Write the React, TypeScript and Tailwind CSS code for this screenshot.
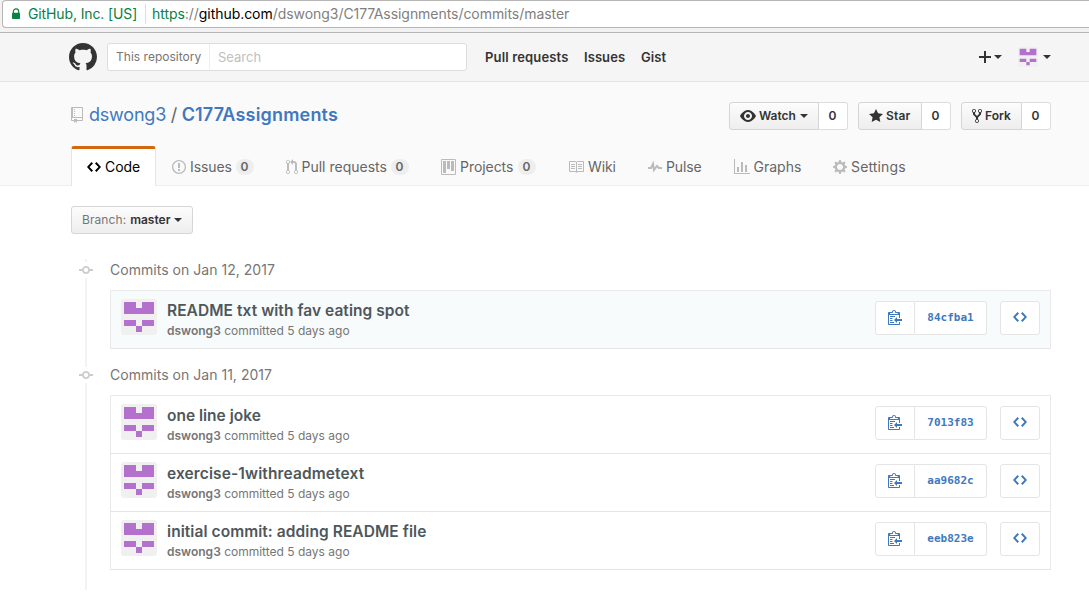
import React from "react";

const icons = {
  mark: [16, "M8 0C3.58 0 0 3.58 0 8c0 3.54 2.29 6.53 5.47 7.59.4.07.55-.17.55-.38 0-.19-.01-.82-.01-1.49-2.01.37-2.53-.49-2.69-.94-.09-.23-.48-.94-.82-1.13-.28-.15-.68-.52-.01-.53.63-.01 1.08.58 1.23.82.72 1.21 1.87.87 2.33.66.07-.52.28-.87.51-1.07-1.78-.2-3.64-.89-3.64-3.95 0-.87.31-1.59.82-2.15-.08-.2-.36-1.02.08-2.12 0 0 .67-.21 2.2.82.64-.18 1.32-.27 2-.27.68 0 1.36.09 2 .27 1.53-1.04 2.2-.82 2.2-.82.44 1.1.16 1.92.08 2.12.51.56.82 1.27.82 2.15 0 3.07-1.87 3.75-3.65 3.95.29.25.54.73.54 1.48 0 1.07-.01 1.93-.01 2.2 0 .21.15.46.55.38A8.013 8.013 0 0 0 16 8c0-4.42-3.58-8-8-8z"],
  repo: [12, "M4 9H3V8h1v1zm0-3H3v1h1V6zm0-2H3v1h1V4zm0-2H3v1h1V2zm8-1v12c0 .55-.45 1-1 1H6v2l-1.5-1.5L3 16v-2H1c-.55 0-1-.45-1-1V1c0-.55.45-1 1-1h10c.55 0 1 .45 1 1zm-1 10H1v2h2v-1h3v1h5v-2zm0-10H2v9h9V1z"],
  eye: [16, "M8.06 2C3 2 0 8 0 8s3 6 8.06 6C13 14 16 8 16 8s-3-6-7.94-6zM8 12c-2.2 0-4-1.78-4-4 0-2.2 1.8-4 4-4 2.22 0 4 1.8 4 4 0 2.22-1.78 4-4 4zm2-4c0 1.11-.89 2-2 2-1.11 0-2-.89-2-2 0-1.11.89-2 2-2 1.11 0 2 .89 2 2z"],
  star: [14, "M14 6l-4.9-.64L7 1 4.9 5.36 0 6l3.6 3.26L2.67 14 7 11.67 11.33 14l-.93-4.74z"],
  fork: [10, "M8 1a1.993 1.993 0 0 0-1 3.72V6L5 8 3 6V4.72A1.993 1.993 0 0 0 2 1a1.993 1.993 0 0 0-1 3.72V6.5l3 3v1.78A1.993 1.993 0 0 0 5 15a1.993 1.993 0 0 0 1-3.72V9.5l3-3V4.72A1.993 1.993 0 0 0 8 1zM2 4.2C1.34 4.2.8 3.65.8 3c0-.65.55-1.2 1.2-1.2.65 0 1.2.55 1.2 1.2 0 .65-.55 1.2-1.2 1.2zm3 10c-.66 0-1.2-.55-1.2-1.2 0-.65.55-1.2 1.2-1.2.65 0 1.2.55 1.2 1.2 0 .65-.55 1.2-1.2 1.2zm3-10c-.66 0-1.2-.55-1.2-1.2 0-.65.55-1.2 1.2-1.2.65 0 1.2.55 1.2 1.2 0 .65-.55 1.2-1.2 1.2z"],
  code: [14, "M9.5 3L8 4.5 11.5 8 8 11.5 9.5 13 14 8 9.5 3zm-5 0L0 8l4.5 5L6 11.5 2.5 8 6 4.5 4.5 3z"],
  issue: [14, "M7 2.3c3.14 0 5.7 2.56 5.7 5.7s-2.56 5.7-5.7 5.7A5.71 5.71 0 0 1 1.3 8c0-3.14 2.56-5.7 5.7-5.7zM7 1C3.14 1 0 4.14 0 8s3.14 7 7 7 7-3.14 7-7-3.14-7-7-7zm1 3H6v5h2V4zm0 6H6v2h2v-2z"],
  pull: [12, "M11 11.28V5c-.03-.78-.34-1.47-.94-2.06C9.46 2.35 8.78 2.03 8 2H7V0L4 3l3 3V4h1c.27.02.48.11.69.31.21.2.3.42.31.69v6.28A1.993 1.993 0 0 0 10 15a1.993 1.993 0 0 0 1-3.72zm-1 2.92c-.66 0-1.2-.55-1.2-1.2 0-.65.55-1.2 1.2-1.2.65 0 1.2.55 1.2 1.2 0 .65-.55 1.2-1.2 1.2zM4 3c0-1.11-.89-2-2-2a1.993 1.993 0 0 0-1 3.72v6.56A1.993 1.993 0 0 0 2 15a1.993 1.993 0 0 0 1-3.72V4.72c.59-.34 1-.98 1-1.72zm-.8 10c0 .66-.55 1.2-1.2 1.2-.65 0-1.2-.55-1.2-1.2 0-.65.55-1.2 1.2-1.2.65 0 1.2.55 1.2 1.2zM2 4.2C1.34 4.2.8 3.65.8 3c0-.65.55-1.2 1.2-1.2.65 0 1.2.55 1.2 1.2 0 .65-.55 1.2-1.2 1.2z"],
  project: [15, "M10 12h3V2h-3v10zm-4-2h3V2H6v8zm-4 4h3V2H2v12zm-1 1h13V1H1v14zM14 0H1a1 1 0 0 0-1 1v14a1 1 0 0 0 1 1h13a1 1 0 0 0 1-1V1a1 1 0 0 0-1-1z"],
  book: [16, "M3 5h4v1H3V5zm0 3h4V7H3v1zm0 2h4V9H3v1zm11-5h-4v1h4V5zm0 2h-4v1h4V7zm0 2h-4v1h4V9zm2-6v9c0 .55-.45 1-1 1H9.5l-1 1-1-1H2c-.55 0-1-.45-1-1V3c0-.55.45-1 1-1h5.5l1 1 1-1H15c.55 0 1 .45 1 1zm-8 .5L7.5 3H2v9h6V3.5zm7-.5H9.5l-.5.5V12h6V3z"],
  pulse: [14, "M11.5 8L8.8 5.4 6.6 8.5 5.5 1.6 2.38 8H0v2h3.6l.9-1.8.9 5.4L9 8.5l1.6 1.5H14V8z"],
  graph: [16, "M16 14v1H0V0h1v14h15zM5 13H3V8h2v5zm4 0H7V3h2v10zm4 0h-2V6h2v7z"],
  gear: [14, "M14 8.77v-1.6l-1.94-.64-.45-1.09.88-1.84-1.13-1.13-1.81.91-1.09-.45-.69-1.92h-1.6l-.63 1.94-1.11.45-1.84-.88-1.13 1.13.91 1.81-.45 1.09L0 7.23v1.59l1.94.64.45 1.09-.88 1.84 1.13 1.13 1.81-.91 1.09.45.69 1.92h1.59l.63-1.94 1.11-.45 1.84.88 1.13-1.13-.92-1.81.47-1.09L14 8.75v.02zM7 11c-1.66 0-3-1.34-3-3s1.34-3 3-3 3 1.34 3 3-1.34 3-3 3z"],
  clippy: [14, "M2 13h4v1H2v-1zm5-6H2v1h5V7zm2 3V8l-3 3 3 3v-2h5v-2H9zM4.5 9H2v1h2.5V9zM2 12h2.5v-1H2v1zm9 1h1v2c-.02.28-.11.52-.3.7-.19.18-.42.28-.7.3H1c-.55 0-1-.45-1-1V4c0-.55.45-1 1-1h3c0-1.11.89-2 2-2 1.11 0 2 .89 2 2h3c.55 0 1 .45 1 1v5h-1V6H1v9h10v-2zM2 5h8c0-.55-.45-1-1-1H8c-.55 0-1-.45-1-1s-.45-1-1-1-1 .45-1 1-.45 1-1 1H3c-.55 0-1 .45-1 1z"],
  commit: [14, "M10.86 7c-.45-1.72-2-3-3.86-3-1.86 0-3.41 1.28-3.86 3H0v2h3.14c.45 1.72 2 3 3.86 3 1.86 0 3.41-1.28 3.86-3H14V7h-3.14zM7 10.2c-1.22 0-2.2-.98-2.2-2.2 0-1.22.98-2.2 2.2-2.2 1.22 0 2.2.98 2.2 2.2 0 1.22-.98 2.2-2.2 2.2z"],
  plus: [12, "M12 9H7v5H5V9H0V7h5V2h2v5h5z"],
} as const;

type IconName = keyof typeof icons;

function Icon({ name, className = "" }: { name: IconName; className?: string }) {
  const [w, d] = icons[name];
  return (
    <svg width={w} height={16} viewBox={`0 0 ${w} 16`} fill="currentColor" className={`shrink-0 ${className}`}>
      <path fillRule="evenodd" d={d} />
    </svg>
  );
}

function Caret({ className = "" }: { className?: string }) {
  return (
    <svg width="8" height="4" viewBox="0 0 8 4" fill="currentColor" className={`shrink-0 ${className}`}>
      <path d="M0 0h8L4 4z" />
    </svg>
  );
}

function Avatar({ className }: { className: string }) {
  return (
    <svg viewBox="0 0 36 36" className={`shrink-0 ${className}`}>
      <rect width="36" height="36" rx="3" fill="#f0f0f0" />
      <path fill="#b370cd" d="M3 3h12v6h6V3h12v12H3zM3 21h12v6H3zM21 21h12v6H21zM15 27h6v6h-6z" />
    </svg>
  );
}

function SocialButton({ icon, label, labelClass, leftClass, rightClass, caret }: { icon: IconName; label: string; labelClass: string; leftClass: string; rightClass: string; caret?: boolean }) {
  return (
    <div className="flex h-7 text-[12px] font-semibold text-[#333]">
      <div className={`flex items-center rounded-l-[3px] border border-[#d5d5d5] bg-linear-to-b from-[#fcfcfc] to-[#eee] pl-[10px] ${leftClass}`}>
        <Icon name={icon} />
        <span className={`whitespace-nowrap ${labelClass}`}>{label}</span>
        {caret && <Caret className="ml-1" />}
      </div>
      <div className={`flex items-center justify-center rounded-r-[3px] border border-l-0 border-[#ddd] bg-white pr-px ${rightClass}`}>0</div>
    </div>
  );
}

const tabs: { icon: IconName; label: string; width: string; text: string; count?: boolean }[] = [
  { icon: "issue", label: "Issues", width: "w-[114px]", text: "ml-1 w-[42px] tracking-[-0.1px]", count: true },
  { icon: "pull", label: "Pull requests", width: "w-[155px]", text: "ml-[3.5px] w-[85.5px] tracking-[0px]", count: true },
  { icon: "project", label: "Projects", width: "w-[127px]", text: "ml-1 w-[54px] tracking-[-0.05px]", count: true },
  { icon: "book", label: "Wiki", width: "w-[80px]", text: "ml-1 tracking-[-0.1px]" },
  { icon: "pulse", label: "Pulse", width: "w-[86px]", text: "ml-1 tracking-[-0.1px]" },
  { icon: "graph", label: "Graphs", width: "w-[99px]", text: "ml-[3.5px] tracking-[0px]" },
  { icon: "gear", label: "Settings", width: "w-[80px]", text: "ml-1 tracking-[0.15px]" },
];

function CommitRow({ title, sha, titleClass, highlighted }: { title: string; sha: string; titleClass: string; highlighted?: boolean }) {
  return (
    <li className={`flex h-[58px] border-b border-[#e5e5e5] pl-[10px] ${highlighted ? "bg-[#f7fbfc]" : "bg-white"}`}>
      <Avatar className="mt-2 size-9" />
      <div className="ml-[10px] flex-1 pt-[10px]">
        <p className={`text-[15.5px] leading-5 font-semibold whitespace-nowrap text-[#4e575b] ${titleClass}`}>{title}</p>
        <p className="mt-px text-[12px] leading-[18px] text-[#767676]">
          <span className="font-semibold">dswong3</span> committed 5 days ago
        </p>
      </div>
      <div className="mt-[10px] mr-[10px] flex h-[34px] text-[#4078c0]">
        <div className="flex w-[40px] items-center justify-center rounded-l-[3px] border border-[#e5e5e5] bg-white pb-0.5"><Icon name="clippy" /></div>
        <div className="mr-[13px] flex w-[72px] items-center justify-center rounded-r-[3px] border border-l-0 border-[#e5e5e5] bg-white font-['DejaVu_Sans_Mono',monospace] text-[11px] font-bold">{sha}</div>
        <div className="flex w-[40px] items-center justify-center rounded-[3px] border border-[#e5e5e5] bg-white pb-0.5"><Icon name="code" /></div>
      </div>
    </li>
  );
}

function GroupTitle({ children }: { children: React.ReactNode }) {
  return (
    <div className="flex h-[21px] items-center text-[14px] tracking-[0.03px] text-[#767676]">
      <span className="flex h-4 w-[30px] items-center justify-center bg-white text-[#ccc]"><Icon name="commit" /></span>
      <span className="ml-[9px]">{children}</span>
    </div>
  );
}

export default function App() {
  return (
    <div className="h-[607px] w-[1089px] overflow-hidden bg-white font-['Inter',sans-serif] text-[#333]">
      <div className="h-[33px] border-b border-[#b6b6b6] bg-[#f2f2f2] pl-[2px]">
        <div className="flex h-7 items-center rounded-l-[4px] border border-r-0 border-[#b5b5b5] bg-white pb-px pl-[9px] text-[14px] whitespace-nowrap text-[#808080]">
          <svg width="8" height="12" viewBox="0 0 9 12" className="text-[#0b8043]">
            <path d="M1.5 5V3.3a3 3 0 0 1 6 0V5" fill="none" stroke="currentColor" strokeWidth="1.3" />
            <rect y="4.5" width="9" height="7" rx=".8" fill="currentColor" />
          </svg>
          <span className="ml-2 w-[117px] tracking-[-0.12px] text-[#0b8043]">GitHub, Inc. [US]</span>
          <span className="mr-[6px] h-5 w-px bg-[#ddd]" />
          <span className="tracking-[-0.05px]"><span className="text-[#0b8043]">https</span>://<span className="text-black">github.com</span>/dswong3/C177Assignments/commits/master</span>
        </div>
      </div>

      <header className="flex h-[49px] items-center border-b border-[#e5e5e5] bg-[#f5f5f5] pl-[69px]">
        <svg width="28" height="28" viewBox="0 0 16 16" fill="#333" className="shrink-0"><path fillRule="evenodd" d={icons.mark[1]} /></svg>
        <div className="ml-[10px] flex h-7 w-[360px] items-center rounded-[3px] border border-[#ddd] bg-white text-[13px]">
          <span className="flex h-full w-[102px] items-center border-r border-[#eee] pl-2 text-[12px] tracking-[0.02px] whitespace-nowrap text-[#767676]">This repository</span>
          <span className="pt-0.5 pl-2 text-[#c0c0c0]">Search</span>
        </div>
        <nav className="ml-[18px] flex pt-0.5 text-[13px] font-semibold whitespace-nowrap">
          <span className="w-[99px] tracking-[0.15px]">Pull requests</span>
          <span className="w-[57px] tracking-[0.08px]">Issues</span>
          <span className="tracking-[0.1px]">Gist</span>
        </nav>
        <div className="mr-[38px] ml-auto flex items-center">
          <Icon name="plus" className="mb-px" />
          <Caret className="mr-[16px] ml-[3px]" />
          <Avatar className="size-5" />
          <Caret className="ml-[5px]" />
        </div>
      </header>

      <section className="h-[104px] border-b border-[#eee] bg-[#fafafa] px-[71px]">
        <div className="flex h-[64px] w-[980px] items-center">
          <Icon name="repo" className="mt-px text-[#bbb]" />
          <h1 className="ml-[6px] text-[18px] whitespace-nowrap text-[#4078c0]">
            <span className="tracking-[-0.2px]">dswong3</span>
            <span className="mx-[4.5px] text-[#666]">/</span>
            <span className="font-semibold tracking-[0.18px]">C177Assignments</span>
          </h1>
          <div className="ml-auto flex gap-[10px] pt-1">
            <SocialButton icon="eye" label="Watch" labelClass="ml-[3px]" leftClass="w-[90px]" rightClass="w-[29px]" caret />
            <SocialButton icon="star" label="Star" labelClass="ml-[3px] tracking-[0.2px]" leftClass="w-[64px]" rightClass="w-[29px]" />
            <SocialButton icon="fork" label="Fork" labelClass="ml-[3px]" leftClass="w-[61px]" rightClass="w-[29px]" />
          </div>
        </div>
        <nav className="flex h-10 w-[980px] text-[14px] whitespace-nowrap text-[#666]">
          <div className="flex h-10 w-[85px] shrink-0 items-center rounded-t-[3px] border-x border-t-[3px] border-x-[#e5e5e5] border-t-[#d26911] bg-white pl-[15px] text-black">
            <Icon name="code" className="mb-0.5" />
            <span className="ml-1 pb-0.5 tracking-[-0.1px]">Code</span>
          </div>
          <div className="ml-4 flex h-10 items-center pt-[3px]">
            {tabs.map((t) => (
              <div key={t.label} className={`flex shrink-0 items-center ${t.width}`}>
                <Icon name={t.icon} className="mb-0.5 text-[#bbb]" />
                <span className={`pb-0.5 ${t.text}`}>{t.label}</span>
                {t.count && <span className="mb-px ml-[3.5px] flex h-4 w-[18px] items-center justify-center rounded-full bg-[#eee] text-[12px] font-semibold">0</span>}
              </div>
            ))}
          </div>
        </nav>
      </section>

      <main className="w-[1051px] pt-5 pl-[71px]">
        <button className="flex h-7 w-[122px] items-center rounded-[3px] border border-[#d5d5d5] bg-linear-to-b from-[#fcfcfc] to-[#eee] pl-[10px] text-[12px] whitespace-nowrap">
          <span className="tracking-[0.08px] text-[#767676]">Branch:</span>
          <span className="ml-1 font-semibold">master</span>
          <Caret className="ml-1" />
        </button>
        <div className="relative mt-[25px] h-[331px]">
          <div className="absolute top-0 left-[14px] h-[331px] w-[2px] bg-[#f3f3f3]" />
          <div className="relative">
            <GroupTitle>Commits on Jan 12, 2017</GroupTitle>
            <ul className="mt-[10px] ml-[39px] border border-b-0 border-[#e9e9e9]">
              <CommitRow title="README txt with fav eating spot" sha="84cfba1" titleClass="tracking-[0.06px]" highlighted />
            </ul>
            <div className="h-[15px]" />
            <GroupTitle>Commits on Jan 11, 2017</GroupTitle>
            <ul className="mt-[10px] ml-[39px] border border-b-0 border-[#e9e9e9]">
              <CommitRow title="one line joke" sha="7013f83" titleClass="tracking-[0px]" />
              <CommitRow title="exercise-1withreadmetext" sha="aa9682c" titleClass="tracking-[0.12px]" />
              <CommitRow title="initial commit: adding README file" sha="eeb823e" titleClass="tracking-[0.07px]" />
            </ul>
          </div>
        </div>
      </main>
    </div>
  );
}
